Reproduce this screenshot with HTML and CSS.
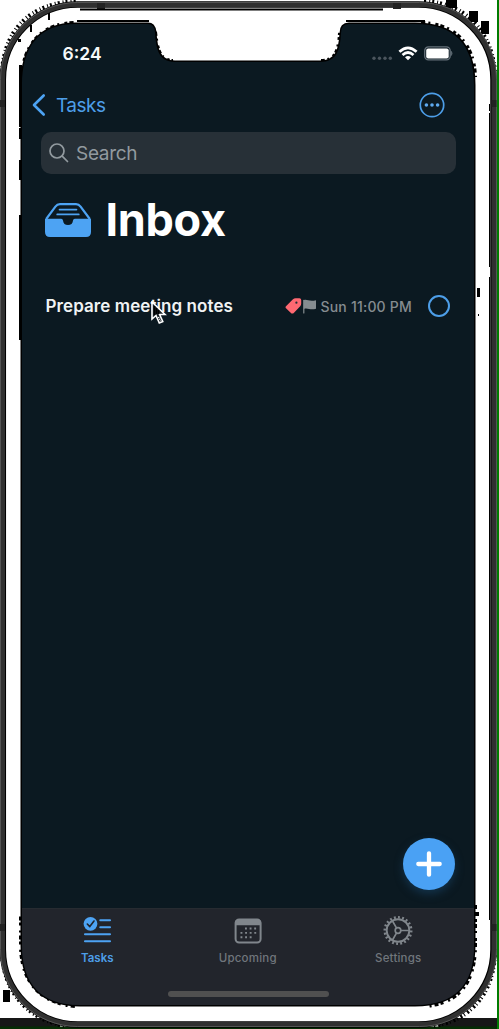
FILE: index.html
```
<!DOCTYPE html>
<html lang="en">
<head>
<meta charset="utf-8">
<title>Inbox</title>
<link rel="stylesheet" href="styles.css">
</head>
<body>
<main class="phone">
  <svg class="bezel" viewBox="0 0 499 1029" aria-hidden="true">
    <rect x="0" y="1018" width="60" height="11" fill="#171717"/>
    <rect x="440" y="1018" width="59" height="11" fill="#171717"/>
    <rect x="0" y="1026.500" width="499" height="3" fill="#052d03"/>
    <path d="M2 72C4 30 30 3 76 1M424 1C468 3 492 34 495 72M2 955C4 990 26 1020 66 1026M495 955C493 992 472 1020 434 1026" fill="none" stroke="#000" stroke-width="4" stroke-dasharray="2 3 1 2"/>
    <rect x="497" y="0" width="2" height="1029" fill="#007b00"/>
    <g fill="#000"><path d="M446 0h11v8h-11zM469 11h9v11h-9zM481 21h8v13h-8zM3 990h7v12H3z"/></g>
    <rect x="2.800" y="4.500" width="490.700" height="1020" rx="75" fill="#fff" stroke="#000" stroke-width="6.500"/>
    <rect x="2.500" y="4.500" width="491.500" height="1020" rx="75" fill="none" stroke="#303030" stroke-width="5"/>
    <rect x=".5" y="2.500" width="496" height="1024" rx="77" fill="none" stroke="#555" stroke-width="1"/>
    <path d="M489.500 113V267M489.500 277V920" stroke="#000" fill="none"/>
    <path d="M0 100h5v7H0zM491.500 100h5v7h-5zM97 3h8v6h-8zM393 3h8v6h-8zM0 924h5v7H0zM491.500 924h5v7h-5z" fill="#222"/>
    <path d="M77 21H149M346 21H425M80 9.500H383" stroke="#000" stroke-width="2" fill="none"/>
    <path d="M22 85C22 48 38 24 76 24H148Q154 24 155 32C156 48 158 62 175 62H320C337 62 340 50 341 33Q341 24 349 24H415C455 24 474 45 474 85V945C474 985 455 1005 415 1005H80C42 1005 22 985 22 945Z" fill="#000" stroke="#000" stroke-width="3"/>
    <path d="M23 75C25 48 40 24 76 24M154 32C156 48 158 62 173 62M321 62C337 62 340 50 341 33M421 24C455 25 473 45 474 77M474 905V945C474 980 460 1002 425 1005M75 1005C42 1002 22 982 22 945V915" fill="none" stroke="#000" stroke-width="6" stroke-dasharray="4 3 2 5 3 2"/>
    <path d="M48 13h2v7h-2zM30 25h2v7h-2zM18 39h3v3h-3zM477 288h3v9h-3zM478 314h1v2h-1zM19 215h3v125h-3zM19 128h2v11h-2zM19 160h2v20h-2zM19 65h3v62h-3zM489 104h1v7h-1zM474 912h5v4h-5z" fill="#000"/>
  </svg>

  <section class="screen">
    <header class="status">
      <span class="clock">6:24</span>
      <svg class="signals" width="82" height="18" viewBox="0 0 82 18">
        <g fill="#4b555d"><circle cx="3" cy="13.300" r="1.700"/><circle cx="8.500" cy="13.300" r="1.700"/><circle cx="14" cy="13.300" r="1.700"/><circle cx="19.300" cy="13.300" r="1.700"/></g>
        <g fill="none" stroke="#fff" stroke-width="2.700"><path d="M28.400 6.800Q37 -1.200 45.600 6.800M31.500 10Q37 5 42.500 10"/></g>
        <path d="M34 12.300Q37 9.800 40 12.300L37 15.300Z" fill="#fff"/>
        <rect x="53.700" y="1.900" width="25.500" height="13" rx="3.800" fill="none" stroke="#66717a" stroke-width="1.300"/>
        <rect x="55.200" y="3.400" width="22.500" height="10" rx="2" fill="#fff"/>
        <path d="M80.300 6.300Q82 8.300 80.300 10.500Z" fill="#66717a" stroke="#66717a" stroke-width=".7"/>
      </svg>
    </header>

    <nav class="nav">
      <a class="back">
        <svg width="14" height="24" viewBox="0 0 14 24"><path d="M11.700 2.500L2 12L11.700 21.500" fill="none" stroke="#4da3f3" stroke-width="2.600" stroke-linecap="round" stroke-linejoin="round"/></svg>
        <span>Tasks</span>
      </a>
      <svg class="more" width="26" height="26" viewBox="0 0 26 26"><circle cx="13" cy="13" r="11.700" fill="none" stroke="#4d9ee8" stroke-width="1.700"/><g fill="#5eaaf0"><circle cx="7.400" cy="13" r="1.800"/><circle cx="13" cy="13" r="1.800"/><circle cx="18.600" cy="13" r="1.800"/></g></svg>
    </nav>

    <div class="search">
      <svg width="20" height="20" viewBox="0 0 20 20"><g fill="none" stroke="#929a9f" stroke-width="1.700" stroke-linecap="round"><circle cx="8" cy="8" r="7"/><path d="M13.200 13.200L18.500 18.500"/></g></svg>
      <span>Search</span>
    </div>

    <div class="heading">
      <svg width="46" height="34" viewBox="0 0 46 34">
        <path d="M1.200 16L10.400 3.700Q12.200 1.200 15 1.200H31Q33.800 1.200 35.600 3.700L44.800 16" fill="none" stroke="#4da3f3" stroke-width="2.200"/>
        <path d="M0 15.800H16.200Q17.800 15.800 18 17.500Q18.500 22 23 22Q27.500 22 28 17.500Q28.200 15.800 29.800 15.800H46V29Q46 34 41 34H5Q0 34 0 29Z" fill="#4da3f3"/>
        <path d="M14.500 6.600H31.500M12.200 11.400H33.800" stroke="#4da3f3" stroke-width="1.700" stroke-linecap="round"/>
      </svg>
      <h1>Inbox</h1>
    </div>

    <div class="task">
      <span class="task-name">Prepare meeting notes</span>
      <svg class="tag" width="17" height="16" viewBox="0 0 17 16"><path d="M1 8.300L7.700 1.500Q9 .3 10.700.3H14.500Q16.200.3 16.200 2V5.800Q16.200 7.200 15.200 8.300L9 14.700Q7.300 16.400 5.700 14.700L1 10.300Q0 9.300 1 8.300Z" fill="#ff6972"/><circle cx="11.400" cy="4.700" r="1.100" fill="#252b34"/></svg>
      <svg class="flag" width="14" height="15" viewBox="0 0 14 15"><path d="M.8 1.300V14" stroke="#858c90" stroke-width="1.200" stroke-linecap="round"/><path d="M.8 1.200C4-.1 6 3 13 1.300V9.800C7 11.500 5 8.500.8 9.900Z" fill="#858c90"/></svg>
      <span class="due">Sun 11:00 PM</span>
      <span class="check"></span>
    </div>

    <button class="add" aria-label="Add task"><svg width="26" height="26" viewBox="0 0 26 26"><path d="M13 2.300V23.700M2.300 13H23.700" stroke="#fff" stroke-width="4.300" stroke-linecap="round"/></svg></button>

    <footer class="tabs">
      <div class="tab active">
        <svg width="30" height="30" viewBox="0 0 30 30"><circle cx="8.500" cy="7.800" r="6.900" fill="#4da3f3"/><path d="M5.300 8L7.800 10.600L12 5" fill="none" stroke="#20242c" stroke-width="1.600" stroke-linecap="round" stroke-linejoin="round"/><path d="M18.300 4.200H28M18.300 11.200H28M3 18.200H28M3 25.200H28" stroke="#4da3f3" stroke-width="2.100" stroke-linecap="round"/></svg>
        <span>Tasks</span>
      </div>
      <div class="tab">
        <svg width="30" height="30" viewBox="0 0 30 30"><rect x="2.600" y="3.600" width="25" height="23" rx="3.500" fill="none" stroke="#80868c" stroke-width="2"/><path d="M2 9.200V6.200Q2 3.200 5.500 3.200H24.500Q28 3.200 28 6.200V9.200Z" fill="#80868c"/><path d="M12 12.500H24M7.500 16.900H24M7.500 21.200H20" stroke="#80868c" stroke-width="1.900" stroke-dasharray="1.900 2.700"/></svg>
        <span>Upcoming</span>
      </div>
      <div class="tab">
        <svg width="30" height="30" viewBox="0 0 30 30"><g fill="none" stroke="#80868c"><circle cx="15" cy="14.500" r="11.300" stroke-width="1.900"/><circle cx="15" cy="14.500" r="13.200" stroke-width="2.600" stroke-dasharray="1.900 2.242" pathLength="82.840"/><circle cx="15" cy="14.500" r="2.800" stroke-width="1.700"/><path d="M17.800 14.500H26.500M13.600 12.100L9.200 4.500M13.600 16.900L9.200 24.500" stroke-width="1.700"/></g></svg>
        <span>Settings</span>
      </div>
      <div class="home"></div>
    </footer>
  </section>
  <svg class="cursor" width="16" height="24" viewBox="0 0 16 24"><path d="M1 1V18L5 14.500L8.300 22L11.800 20.500L8.600 13.500H14Z" fill="#182026" stroke="#fff" stroke-width="1.600"/><path d="M3.500 5V14M5.500 7V13M7.500 9V13" stroke="#000" stroke-width="1.500"/><path d="M7.500 16l2 4" stroke="#fff" stroke-width="1.500" stroke-dasharray="1 1"/></svg>
</main>
</body>
</html>
```
FILE: styles.css
```
* { box-sizing: border-box; }
body { margin: 0; background: #fff; font-family: Inter, "Liberation Sans", sans-serif; }
svg { display: block; flex: none; }
.phone { position: relative; width: 499px; height: 1029px; padding: 24px 25px 24px 22px; overflow: hidden; }
.bezel { position: absolute; inset: 0; width: 499px; height: 1029px; }
.screen {
  position: relative; width: 452px; height: 981px; display: flex; flex-direction: column;
  background: #0b1921;
  clip-path: path("M0 61C0 24 16 0 54 0H126Q132 0 133 8C134 24 136 38 153 38H298C315 38 318 26 319 9Q319 0 327 0H393C433 0 452 21 452 61V921C452 961 433 981 393 981H58C20 981 0 961 0 921Z");
}
.status { height: 58px; padding: 0 21px 0 40.5px; display: flex; justify-content: space-between; align-items: center; }
.clock { padding-top: 1px; color: #f7f9fa; font-size: 17.5px; font-weight: 600; }
.signals { margin-top: 2px; }
.nav { height: 46px; padding: 0 29px 0 10px; display: flex; justify-content: space-between; align-items: center; }
.back { display: flex; align-items: center; gap: 10px; color: #4d9ee8; font-size: 19px; letter-spacing: -.5px; }
.search { height: 42px; margin: 4px 18.5px 0 18.5px; padding: 0 8.5px; display: flex; align-items: center; gap: 7px; border-radius: 10px; background: #273037; color: #929a9f; font-size: 19px; letter-spacing: -.3px; }
.heading { height: 56px; margin-top: 18px; padding-left: 23px; display: flex; align-items: center; gap: 14.5px; }
.heading h1 { margin: 0; color: #fff; font-size: 45px; line-height: 56px; font-weight: 700; letter-spacing: -.3px; }
.task { height: 40px; margin-top: 38px; padding: 0 24px 0 23.5px; display: flex; align-items: center; }
.task-name { flex: 1; color: #f0f3f4; font-size: 17px; font-weight: 600; letter-spacing: .08px; white-space: nowrap; }
.flag { margin-left: 1px; }
.due { margin-left: 3.5px; width: 92px; color: #858c90; font-size: 14px; font-weight: 500; letter-spacing: .2px; white-space: nowrap; }
.check { width: 22px; height: 22px; margin-left: 15.5px; border: 2px solid #4d9ee8; border-radius: 50%; }
.add { width: 52px; height: 52px; margin: auto 19px 18px auto; padding: 0; display: flex; align-items: center; justify-content: center; border: 0; border-radius: 50%; background: #4aa1f4; box-shadow: 0 4px 9px #13324a; }
.tabs { height: 97px; display: grid; grid-template-columns: repeat(3, 150.5px); grid-template-rows: 82px 6px; background: #22252c; border-top: 1px solid #272b31; }
.tab { padding-top: 7px; display: flex; flex-direction: column; align-items: center; gap: 4px; color: #70767c; font-size: 11.5px; line-height: 16px; font-weight: 500; letter-spacing: .2px; }
.tab.active { color: #4d9ee8; font-weight: 600; letter-spacing: 0; }
.home { grid-column: 1 / -1; justify-self: center; width: 161px; height: 6px; margin-left: 2px; border-radius: 3px; background: #505050; }
.cursor { position: absolute; left: 151px; top: 301px; }
```
